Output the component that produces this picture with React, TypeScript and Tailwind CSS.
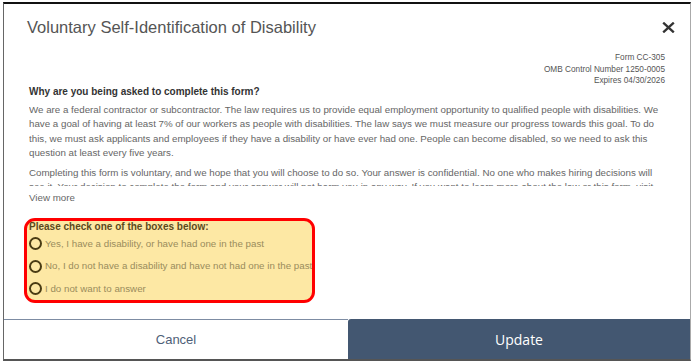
import React from 'react';

const options = [
  'Yes, I have a disability, or have had one in the past',
  'No, I do not have a disability and have not had one in the past',
  'I do not want to answer',
];

const App: React.FC = () => {
  return (
    <div className="w-[694px] h-[364px] bg-white pt-[2px] pl-[3px] overflow-hidden font-['Liberation_Sans',Arial,sans-serif]">
      <div className="w-[688px] h-[359px] flex flex-col bg-white border-t-2 border-t-[#111] border-l border-l-[#666] border-r border-r-[#aaa] border-b-2 border-b-[#555]">
        {/* header */}
        <div className="flex items-center justify-between pl-[23px] pr-[14px] pt-[13px]">
          <h1 className="text-[16.5px] leading-[20px] text-[#555]">Voluntary Self-Identification of Disability</h1>
          <button className="w-[16px] h-[16px] flex items-center justify-center text-[#333]">
            <svg width="13" height="11" viewBox="0 0 13 11">
              <path d="M1.2 0.6 L11.8 10.4 M11.8 0.6 L1.2 10.4" stroke="currentColor" strokeWidth="2.3" fill="none" />
            </svg>
          </button>
        </div>

        {/* body */}
        <div className="px-[25px] pt-[15px]">
          <div className="text-right text-[8.25px] leading-[11.5px] text-[#555]">
            <p>Form CC-305</p>
            <p>OMB Control Number 1250-0005</p>
            <p>Expires 04/30/2026</p>
          </div>
          <h2 className="-mt-[2px] text-[10px] leading-[14px] font-bold text-[#333]">Why are you being asked to complete this form?</h2>
          <div className="mt-[4.5px] h-[82.5px] overflow-hidden text-[9.75px] leading-[14.25px] text-[#666]">
            <p>
              We are a federal contractor or subcontractor. The law requires us to provide equal employment opportunity to qualified people with disabilities. We have a goal of having at least 7% of our workers as people with disabilities. The law says we must measure our progress towards this goal. To do this, we must ask applicants and employees if they have a disability or have ever had one. People can become disabled, so we need to ask this question at least every five years.
            </p>
            <p className="mt-[6px]">
              Completing this form is voluntary, and we hope that you will choose to do so. Your answer is confidential. No one who makes hiring decisions will see it. Your decision to complete the form and your answer will not harm you in any way. If you want to learn more about the law or this form, visit the U.S. Department of Labor's Office of Federal Contract Compliance Programs (OFCCP) website.
            </p>
          </div>
          <a className="block mt-[5px] text-[9.75px] leading-[14px] text-[#666]">View more</a>

          {/* highlighted question */}
          <div className="mt-[13px] -ml-[5px] w-[291px] h-[85px] overflow-hidden rounded-[11px] border-[3px] border-[#f00] bg-[#fde8a4] pl-[2px]">
            <p className="text-[10px] leading-[12px] font-bold text-[#5b4a1c]">Please check one of the boxes below:</p>
            <div className="mt-[4px] flex flex-col gap-[8.5px]">
              {options.map((opt) => (
                <label key={opt} className="flex items-center gap-[3px] whitespace-nowrap">
                  <span className="w-[13px] h-[13px] shrink-0 rounded-full border-2 border-[#4a3c14]" />
                  <span className="text-[9.75px] leading-[14px] text-[#9a8c5c]">{opt}</span>
                </label>
              ))}
            </div>
          </div>
        </div>

        {/* footer */}
        <div className="mt-auto flex h-[40px]">
          <button className="flex-1 border-t border-t-[#7d8ca3] text-[13px] text-[#4f5f78]">Cancel</button>
          <button className="w-[342px] rounded-tl-[3px] bg-[#435771] text-[14px] text-white font-['Open_Sans',sans-serif]">Update</button>
        </div>
      </div>
    </div>
  );
};

export default App;
